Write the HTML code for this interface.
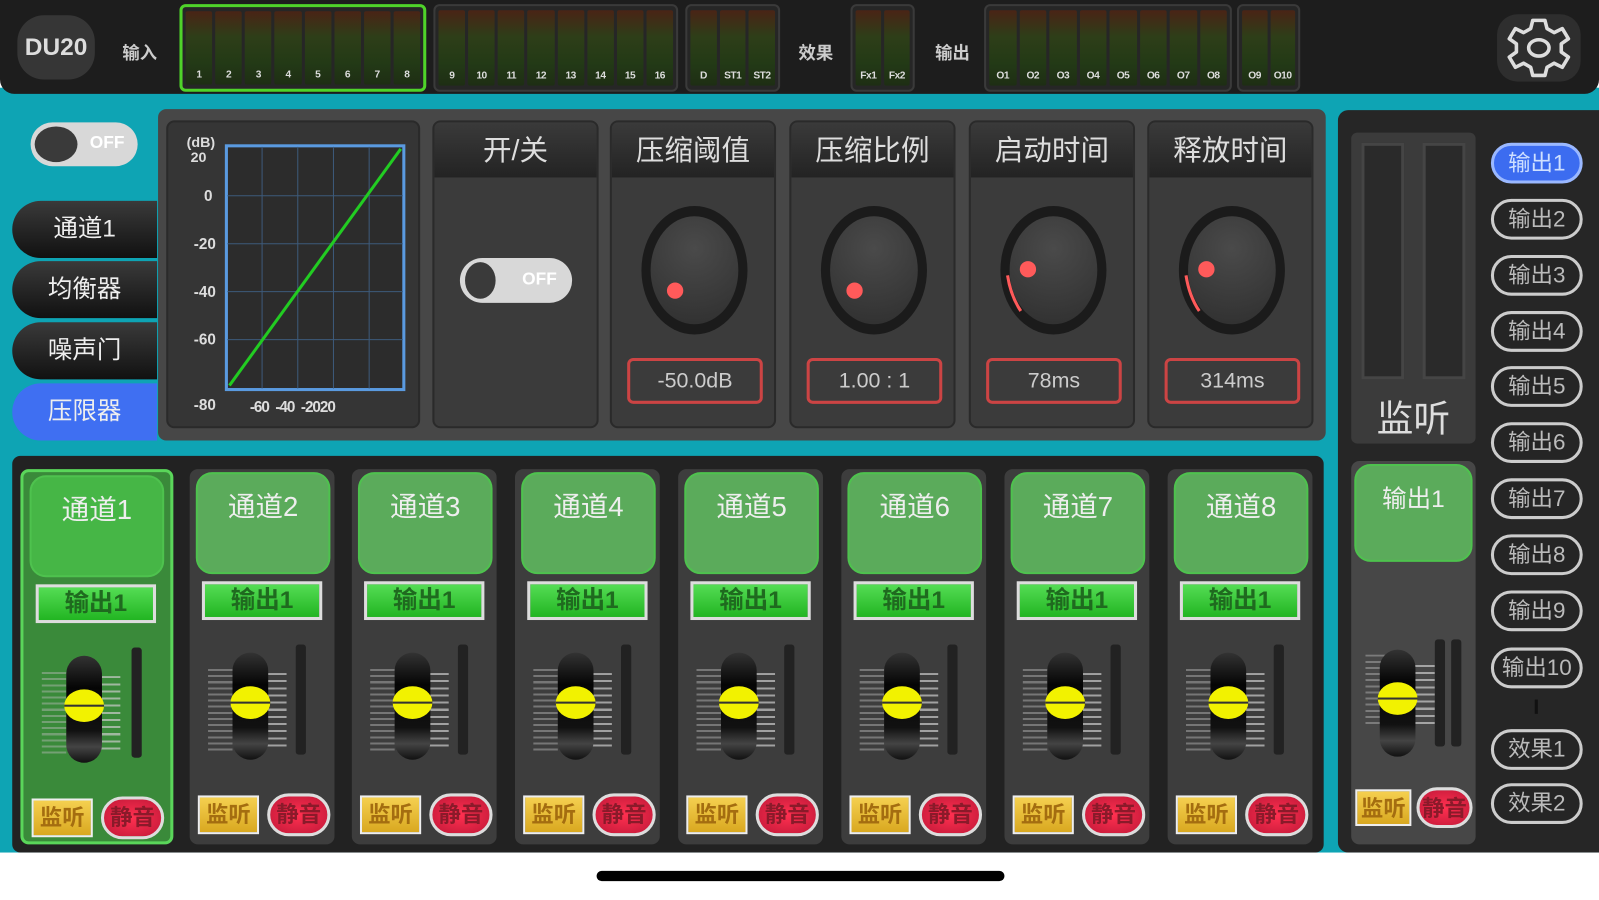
<!DOCTYPE html>
<html><head><meta charset="utf-8"><style>
*{box-sizing:border-box;margin:0;padding:0}
body{width:1599px;height:900px;overflow:hidden;background:#fff;font-family:"Liberation Sans","Noto Sans CJK SC",sans-serif}
#w{position:absolute;left:0;top:0;width:1568px;height:883px;transform:scale(1.01978);transform-origin:0 0}
.a{position:absolute}
.grp{position:absolute;top:4px;height:86px;background:#262626;border:2px solid #3a3a3a;border-radius:6px;display:flex;gap:3px;padding:4px 3px}
.m{flex:1;background:linear-gradient(#4a2416 0%,#2e3e18 35%,#233a16 70%,#1e2e14 100%);position:relative;border-radius:2px}
.m span{position:absolute;bottom:4px;left:0;right:0;text-align:center;color:#ddd;font-size:10px;font-weight:bold;letter-spacing:-0.5px}
.lbl{position:absolute;color:#ccc;font-size:17px;font-weight:bold}
.tab{position:absolute;left:12px;width:142px;height:56px;border-radius:28px 0 0 28px;background:linear-gradient(#3a3a3a,#111);color:#eee;font-size:24px;text-align:center;line-height:56px}
.sub{position:absolute;top:118px;width:163px;height:302px;background:#3b3b3b;border:2px solid #2a2a2a;border-radius:8px;overflow:hidden}
.sub .h{height:54px;background:linear-gradient(#3a3a3a,#232323);color:#ddd;font-size:28px;text-align:center;line-height:56px}
.knob{position:absolute;left:29px;top:82px;width:104px;height:126px;border-radius:50%;background:#1b1b1b}
.knob i{position:absolute;left:9px;top:10px;right:9px;bottom:10px;border-radius:50%;background:radial-gradient(circle at 50% 30%,#4a4a4a,#2e2e2e)}
.dot{position:absolute;width:16px;height:16px;border-radius:50%;background:#ff5a5a}
.val{position:absolute;left:15px;top:231px;width:133px;height:45px;border:3px solid #c44;border-radius:6px;color:#ccc;font-size:21px;text-align:center;line-height:39px}
.st{position:absolute;top:460px;width:142px;height:368px;background:#3d3d3d;border-radius:8px}
.st .hd{position:absolute;left:6px;top:3px;width:132px;height:100px;border-radius:16px;background:#5bab5b;border:2px solid #4ec24e;color:#eee;font-size:27px;text-align:center;padding-top:10px}
.st .ob{position:absolute;left:12px;top:110px;width:118px;height:38px;background:linear-gradient(#55dd55,#22b522);border:3px solid #ddd;color:#1f6a1f;font-size:24px;text-align:center;line-height:32px;font-weight:bold}
.st .cap{position:absolute;left:42px;top:180px;width:35px;height:105px;border-radius:18px;background:linear-gradient(#333 0%,#050505 30%,#111 70%,#444 85%,#111 100%)}
.st .yl{position:absolute;left:40px;top:213px;width:39px;height:32px;border-radius:50%;background:#f2f200}
.st .yl:after{content:"";position:absolute;left:0;right:0;top:15px;height:2px;background:#333}
.st .sc{position:absolute;left:75px;top:200px;width:20px;height:72px;background:repeating-linear-gradient(#ccc 0 2px,transparent 2px 7px);opacity:.7}
.st .tx{position:absolute;left:18px;top:196px;width:24px;height:80px;background:repeating-linear-gradient(#bbb 0 2px,transparent 2px 6px);opacity:.45}
.st .mt{position:absolute;left:104px;top:172px;width:10px;height:108px;background:#222;border-radius:3px}
.st .mon{position:absolute;left:8px;top:320px;width:60px;height:38px;background:linear-gradient(#f5d050,#d9a820);border:2px solid #eee;color:#a46d10;font-size:22px;text-align:center;line-height:34px;font-weight:bold}
.st .mu{position:absolute;left:76px;top:318px;width:62px;height:42px;border-radius:21px;background:radial-gradient(#ff3050,#c01838);border:3px solid #ddd;color:#8a1a2a;font-size:22px;text-align:center;line-height:36px;font-weight:bold}
.pb{position:absolute;left:1462px;width:90px;height:40px;border:3px solid #ccc;border-radius:20px;background:#252525;color:#bbb;font-size:22px;text-align:center;line-height:34px}
</style></head><body><div id="w">
<div class="a" style="left:0;top:86px;width:1568px;height:750px;background:#0ea4b4"></div>
<div class="a" style="left:0;top:0;width:1568px;height:92px;background:#1d1d1d;border-radius:0 0 14px 14px"></div>
<div class="a" style="left:585px;top:854px;width:400px;height:10px;background:#000;border-radius:5px"></div>

<div class="a" style="left:17px;top:15px;width:76px;height:63px;border-radius:26px;background:#363636;color:#ddd;font-size:24px;font-weight:bold;text-align:center;line-height:63px">DU20</div>
<div class="lbl" style="left:120px;top:38px">输入</div>
<div class="grp" style="left:176px;width:242px;border:3px solid #4fd32a"><div class="m"><span>1</span></div><div class="m"><span>2</span></div><div class="m"><span>3</span></div><div class="m"><span>4</span></div><div class="m"><span>5</span></div><div class="m"><span>6</span></div><div class="m"><span>7</span></div><div class="m"><span>8</span></div></div>
<div class="grp" style="left:425px;width:240px"><div class="m"><span>9</span></div><div class="m"><span>10</span></div><div class="m"><span>11</span></div><div class="m"><span>12</span></div><div class="m"><span>13</span></div><div class="m"><span>14</span></div><div class="m"><span>15</span></div><div class="m"><span>16</span></div></div>
<div class="grp" style="left:672px;width:93px"><div class="m"><span>D</span></div><div class="m"><span>ST1</span></div><div class="m"><span>ST2</span></div></div>
<div class="lbl" style="left:783px;top:38px">效果</div>
<div class="grp" style="left:834px;width:63px"><div class="m"><span>Fx1</span></div><div class="m"><span>Fx2</span></div></div>
<div class="lbl" style="left:917px;top:38px">输出</div>
<div class="grp" style="left:965px;width:243px"><div class="m"><span>O1</span></div><div class="m"><span>O2</span></div><div class="m"><span>O3</span></div><div class="m"><span>O4</span></div><div class="m"><span>O5</span></div><div class="m"><span>O6</span></div><div class="m"><span>O7</span></div><div class="m"><span>O8</span></div></div>
<div class="grp" style="left:1213px;width:62px"><div class="m"><span>O9</span></div><div class="m"><span>O10</span></div></div>
<div class="a" style="left:1468px;top:14px;width:82px;height:66px;border-radius:20px;background:#2e2e2e"></div>
<svg class="a" style="left:1470px;top:14px" width="78" height="66" viewBox="-39 -33 78 66"><g fill="none" stroke="#ddd" stroke-width="3.5" stroke-linejoin="round"><path d="M-6,-27 L6,-27 L8,-19 L15,-15 L23,-19 L29,-9 L22,-4 L22,4 L29,9 L23,19 L15,15 L8,19 L6,27 L-6,27 L-8,19 L-15,15 L-23,19 L-29,9 L-22,4 L-22,-4 L-29,-9 L-23,-19 L-15,-15 L-8,-19 Z"/><ellipse cx="0" cy="0" rx="10" ry="8"/></g></svg>

<div class="a" style="left:30px;top:120px;width:105px;height:43px;border-radius:22px;background:#d8d8d8"></div>
<div class="a" style="left:34px;top:124px;width:42px;height:35px;border-radius:50%;background:#3a3a3a"></div>
<div class="a" style="left:88px;top:130px;color:#fff;font-size:17px;font-weight:bold">OFF</div>
<div class="tab" style="top:197px">通道1</div>
<div class="tab" style="top:256px">均衡器</div>
<div class="tab" style="top:316px">噪声门</div>
<div class="tab" style="top:376px;background:#3f6ff2">压限器</div>

<div class="a" style="left:155px;top:107px;width:1145px;height:325px;background:#474747;border-radius:8px"></div>
<div class="a" style="left:163px;top:118px;width:249px;height:302px;background:#353535;border:2px solid #2a2a2a;border-radius:8px"></div>
<div class="a" style="left:183px;top:132px;color:#ddd;font-size:14px;font-weight:bold;line-height:15px">(dB)<br>&nbsp;20</div>
<div class="a" style="left:200px;top:184px;color:#ddd;font-size:15px;font-weight:bold">0</div>
<div class="a" style="left:190px;top:231px;color:#ddd;font-size:15px;font-weight:bold">-20</div>
<div class="a" style="left:190px;top:278px;color:#ddd;font-size:15px;font-weight:bold">-40</div>
<div class="a" style="left:190px;top:325px;color:#ddd;font-size:15px;font-weight:bold">-60</div>
<div class="a" style="left:190px;top:389px;color:#ddd;font-size:15px;font-weight:bold">-80</div>
<div class="a" style="left:245px;top:391px;color:#ddd;font-size:15px;font-weight:bold;letter-spacing:-1px">-60 &nbsp;-40 &nbsp;-2020</div>
<svg class="a" style="left:220px;top:141px" width="178" height="243"><rect x="2" y="2" width="174" height="239" fill="#2c2c2c" stroke="#5a9ae0" stroke-width="3"/><g stroke="#3d5a7a" stroke-width="1"><line x1="37" y1="3" x2="37" y2="240"/><line x1="72" y1="3" x2="72" y2="240"/><line x1="107" y1="3" x2="107" y2="240"/><line x1="142" y1="3" x2="142" y2="240"/><line x1="3" y1="51" x2="175" y2="51"/><line x1="3" y1="98" x2="175" y2="98"/><line x1="3" y1="145" x2="175" y2="145"/><line x1="3" y1="192" x2="175" y2="192"/></g><line x1="5" y1="237" x2="173" y2="5" stroke="#22cc22" stroke-width="3"/></svg>

<div class="sub" style="left:424px"><div class="h">开/关</div>
<div class="a" style="left:25px;top:133px;width:110px;height:44px;border-radius:22px;background:#d8d8d8"></div>
<div class="a" style="left:30px;top:137px;width:30px;height:36px;border-radius:50%;background:#3a3a3a"></div>
<div class="a" style="left:86px;top:144px;color:#fff;font-size:17px;font-weight:bold">OFF</div></div>
<div class="sub" style="left:598px"><div class="h">压缩阈值</div><div class="knob"><i></i><div class="dot" style="left:25px;top:75px"></div></div><div class="val">-50.0dB</div></div>
<div class="sub" style="left:774px"><div class="h">压缩比例</div><div class="knob"><i></i><div class="dot" style="left:25px;top:75px"></div></div><div class="val">1.00 : 1</div></div>
<div class="sub" style="left:950px"><div class="h">启动时间</div><div class="knob"><i></i><svg class="a" style="left:0;top:0" width="104" height="126"><path d="M7,68 Q10,88 20,103" fill="none" stroke="#ff5a5a" stroke-width="3"/></svg><div class="dot" style="left:19px;top:54px"></div></div><div class="val">78ms</div></div>
<div class="sub" style="left:1125px"><div class="h">释放时间</div><div class="knob"><i></i><svg class="a" style="left:0;top:0" width="104" height="126"><path d="M7,68 Q10,88 20,103" fill="none" stroke="#ff5a5a" stroke-width="3"/></svg><div class="dot" style="left:19px;top:54px"></div></div><div class="val">314ms</div></div>

<div class="a" style="left:12px;top:447px;width:1286px;height:389px;background:#222;border-radius:8px"></div>
<div class="st" style="left:20px;width:150px;background:#3a8a3a;border:3px solid #5ad65a"><div class="hd" style="background:#46b646">通道1</div><div class="ob">输出1</div><div class="tx"></div><div class="sc"></div><div class="cap"></div><div class="yl"></div><div class="mt" style="left:106px"></div><div class="mon">监听</div><div class="mu">静音</div></div>
<div class="st" style="left:186px"><div class="hd">通道2</div><div class="ob">输出1</div><div class="tx"></div><div class="sc"></div><div class="cap"></div><div class="yl"></div><div class="mt"></div><div class="mon">监听</div><div class="mu">静音</div></div>
<div class="st" style="left:345px"><div class="hd">通道3</div><div class="ob">输出1</div><div class="tx"></div><div class="sc"></div><div class="cap"></div><div class="yl"></div><div class="mt"></div><div class="mon">监听</div><div class="mu">静音</div></div>
<div class="st" style="left:505px"><div class="hd">通道4</div><div class="ob">输出1</div><div class="tx"></div><div class="sc"></div><div class="cap"></div><div class="yl"></div><div class="mt"></div><div class="mon">监听</div><div class="mu">静音</div></div>
<div class="st" style="left:665px"><div class="hd">通道5</div><div class="ob">输出1</div><div class="tx"></div><div class="sc"></div><div class="cap"></div><div class="yl"></div><div class="mt"></div><div class="mon">监听</div><div class="mu">静音</div></div>
<div class="st" style="left:825px"><div class="hd">通道6</div><div class="ob">输出1</div><div class="tx"></div><div class="sc"></div><div class="cap"></div><div class="yl"></div><div class="mt"></div><div class="mon">监听</div><div class="mu">静音</div></div>
<div class="st" style="left:985px"><div class="hd">通道7</div><div class="ob">输出1</div><div class="tx"></div><div class="sc"></div><div class="cap"></div><div class="yl"></div><div class="mt"></div><div class="mon">监听</div><div class="mu">静音</div></div>
<div class="st" style="left:1145px"><div class="hd">通道8</div><div class="ob">输出1</div><div class="tx"></div><div class="sc"></div><div class="cap"></div><div class="yl"></div><div class="mt"></div><div class="mon">监听</div><div class="mu">静音</div></div>

<div class="a" style="left:1312px;top:108px;width:256px;height:728px;background:#262626;border-radius:10px 0 0 10px"></div>
<div class="a" style="left:1325px;top:130px;width:122px;height:305px;background:#3b3b3b;border-radius:6px"></div>
<div class="a" style="left:1335px;top:140px;width:42px;height:232px;background:#2a2a2a;border:3px solid #454545"></div>
<div class="a" style="left:1395px;top:140px;width:42px;height:232px;background:#2a2a2a;border:3px solid #454545"></div>
<div class="a" style="left:1325px;top:382px;width:122px;text-align:center;color:#ddd;font-size:36px">监听</div>
<div class="st" style="left:1325px;top:452px;width:122px;height:376px;background:#474747"><div class="hd" style="left:3px;top:3px;width:116px;height:96px;font-size:24px;padding-top:12px">输出1</div><div class="tx" style="left:14px;top:190px;height:70px"></div><div class="sc" style="left:62px;top:200px;height:60px"></div><div class="cap" style="left:28px;top:185px"></div><div class="yl" style="left:26px;top:217px"></div><div class="mt" style="left:82px;top:175px;height:105px"></div><div class="mt" style="left:98px;top:175px;height:105px"></div><div class="mon" style="left:4px;top:322px;width:55px;height:36px">监听</div><div class="mu" style="left:64px;top:320px;width:55px;height:40px">静音</div></div>

<div class="pb" style="top:140px;background:#3c6cf0;border-color:#9ab8ff;color:#cfe0ff">输出1</div>
<div class="pb" style="top:195px">输出2</div>
<div class="pb" style="top:250px">输出3</div>
<div class="pb" style="top:305px">输出4</div>
<div class="pb" style="top:359px">输出5</div>
<div class="pb" style="top:414px">输出6</div>
<div class="pb" style="top:469px">输出7</div>
<div class="pb" style="top:524px">输出8</div>
<div class="pb" style="top:579px">输出9</div>
<div class="pb" style="top:635px">输出10</div>
<div class="a" style="left:1505px;top:686px;width:3px;height:14px;background:#111"></div>
<div class="pb" style="top:715px">效果1</div>
<div class="pb" style="top:768px">效果2</div>
</div></body></html>
